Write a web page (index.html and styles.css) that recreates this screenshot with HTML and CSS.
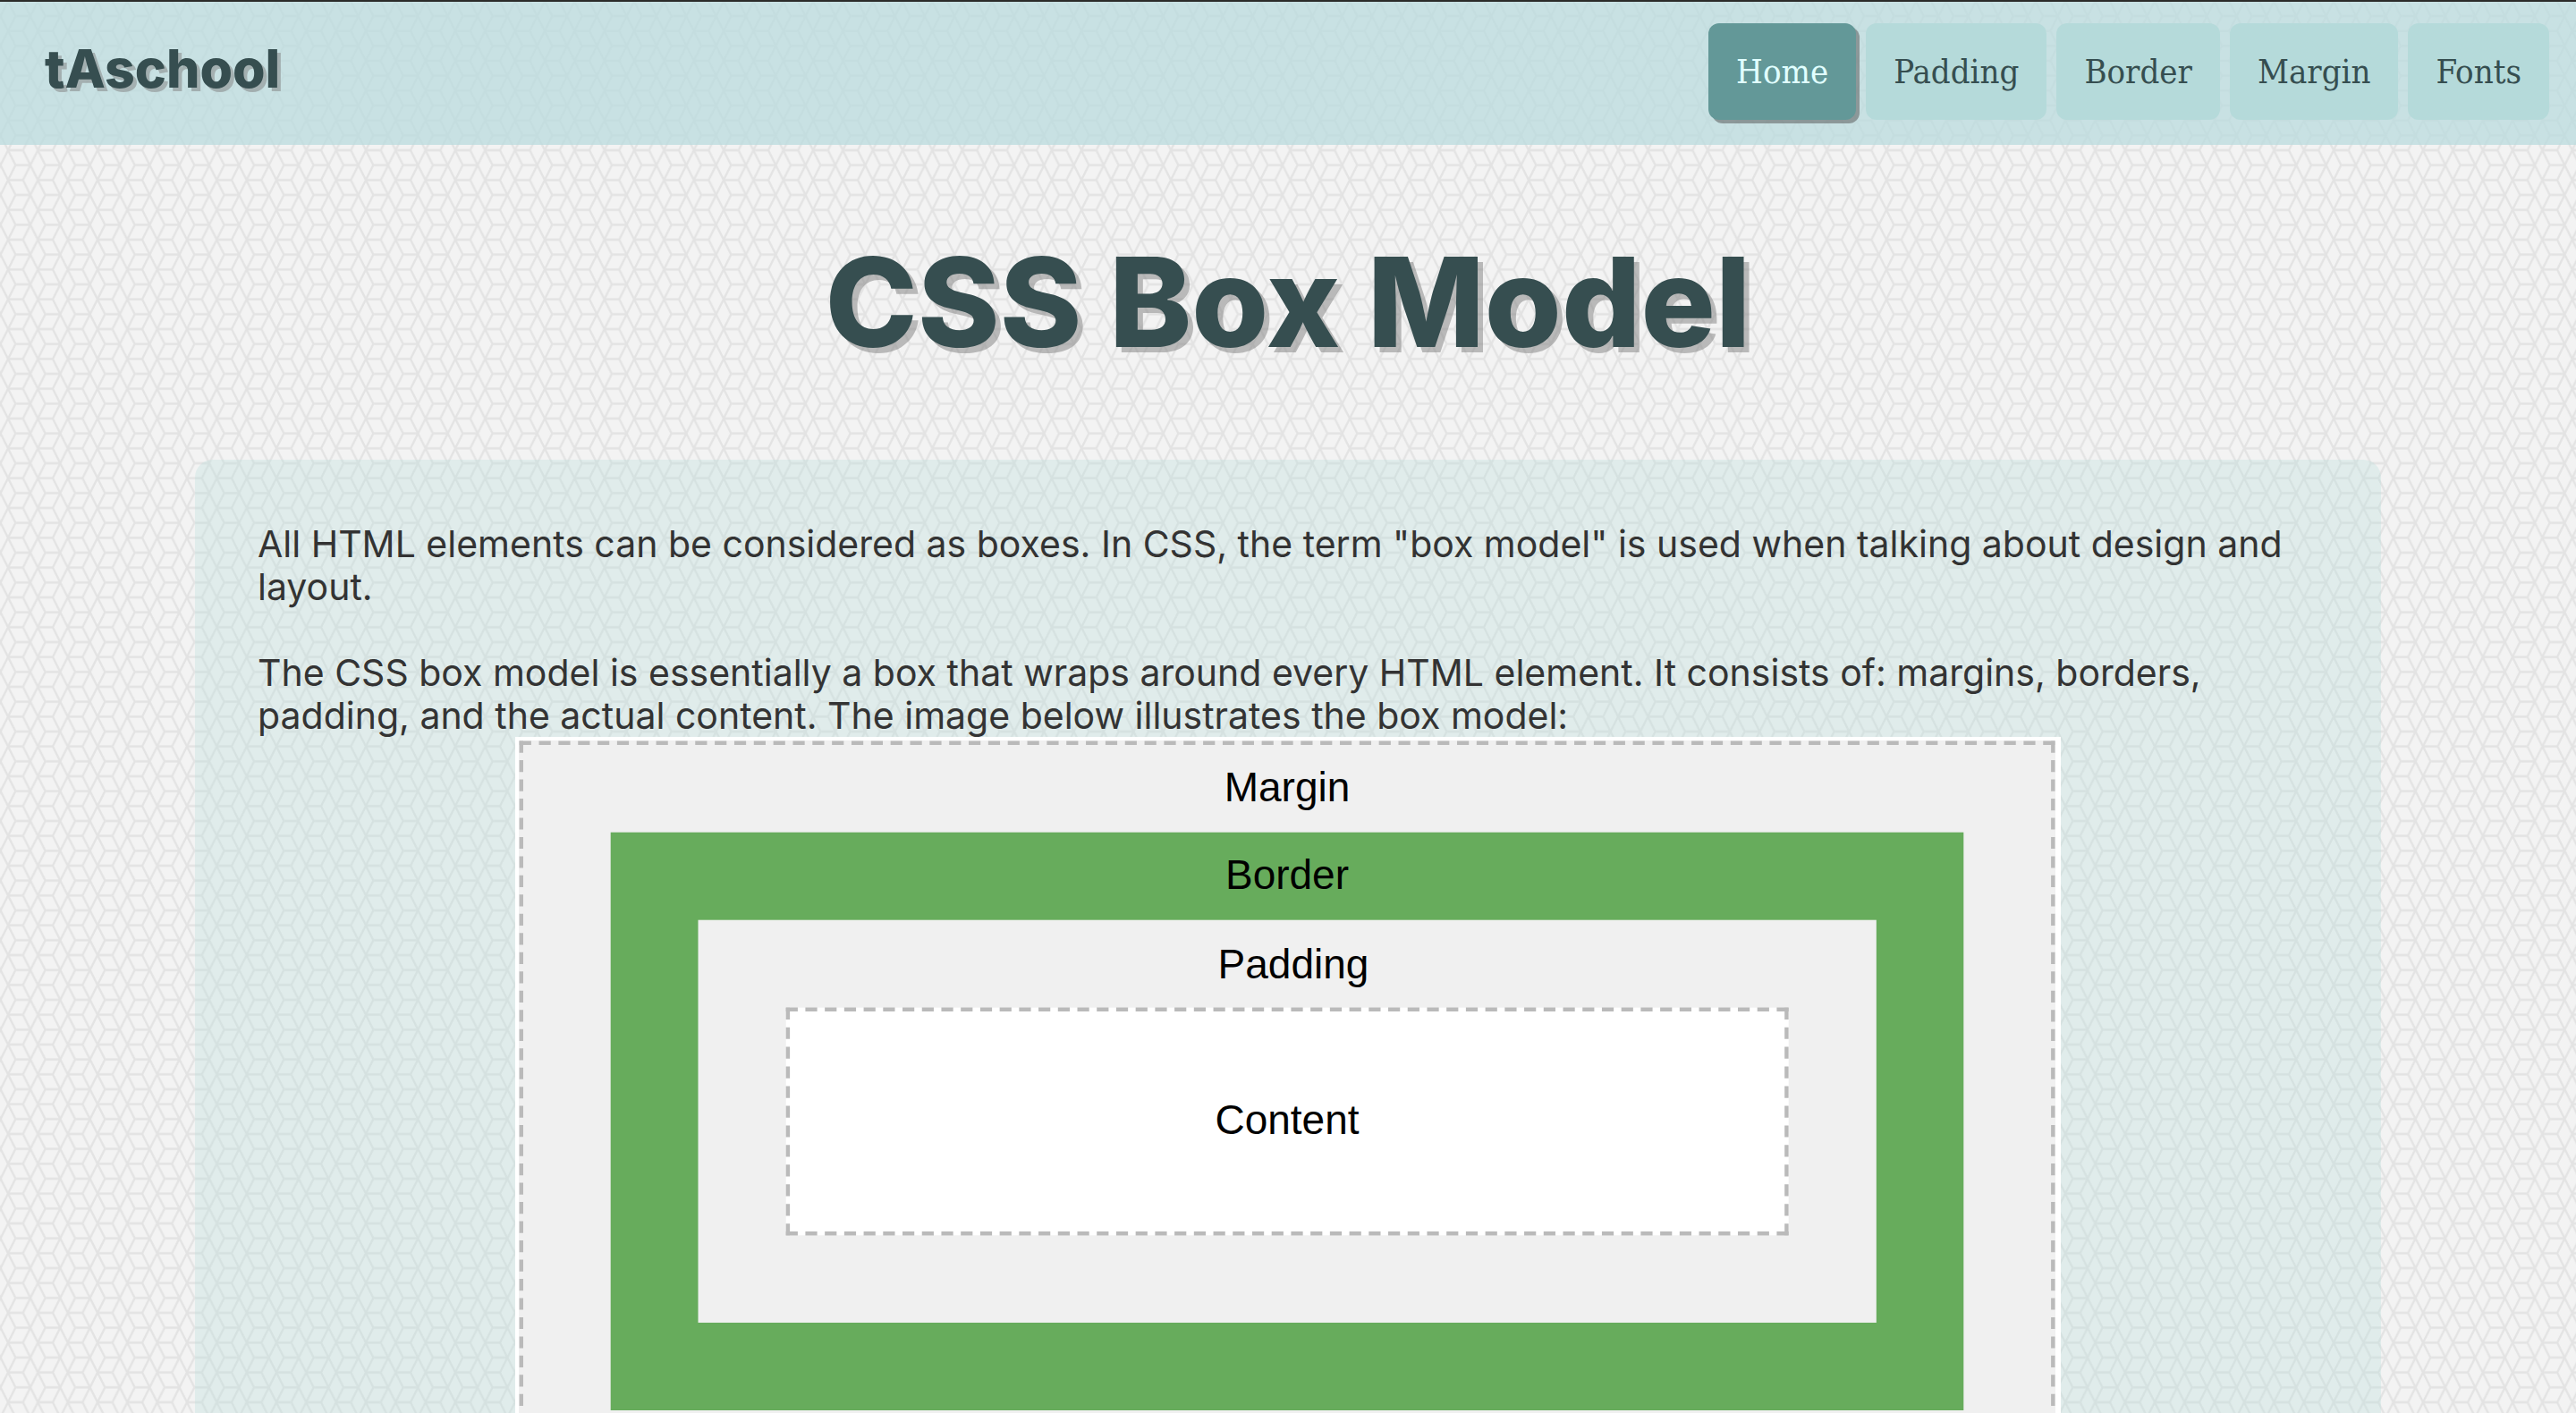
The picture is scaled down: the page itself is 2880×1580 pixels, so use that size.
FILE: index.html
```html
<!DOCTYPE html>
<html lang="en">
<head>
  <meta charset="utf-8">
  <meta name="viewport" content="width=device-width, initial-scale=1">
  <title>CSS Box Model</title>
  <link rel="stylesheet" href="styles.css">
</head>
<body>
  <header class="site-header">
    <a class="logo" href="#">tAschool</a>
    <nav class="site-nav">
      <a class="nav-link nav-link-active" href="#">Home</a>
      <a class="nav-link" href="#">Padding</a>
      <a class="nav-link" href="#">Border</a>
      <a class="nav-link" href="#">Margin</a>
      <a class="nav-link" href="#">Fonts</a>
    </nav>
  </header>
  <main>
    <h1 class="page-title">CSS Box Model</h1>
    <section class="card">
      <p class="card-text">All HTML elements can be considered as boxes. In CSS, the term "box model" is used when talking about design and layout.</p>
      <p class="card-text">The CSS box model is essentially a box that wraps around every HTML element. It consists of: margins, borders, padding, and the actual content. The image below illustrates the box model:</p>
      <svg class="diagram" viewBox="0 0 1728 856" role="img" aria-label="Box model diagram">
        <rect width="1728" height="856" fill="#fff"/>
        <rect x="4" y="4" width="1718" height="848" fill="#f0f0f0"/>
        <g stroke="#bababa" stroke-width="4.4">
          <path d="M4.7 6.7H1721.5M4.7 849.5H1721.5" stroke-dasharray="13.2 8.64"/>
          <path d="M6.8 4.5V852M1719.3 4.5V852" stroke-dasharray="13.2 8.28"/>
        </g>
        <rect x="106.7" y="106.7" width="1512.6" height="646.3" fill="#67ac5c"/>
        <rect x="204.5" y="204.7" width="1317.3" height="450.3" fill="#f0f0f0"/>
        <rect x="302.7" y="302.7" width="1121" height="254.6" fill="#fff"/>
        <g stroke="#bababa" stroke-width="4.4">
          <path d="M302.7 304.8H1423.6M302.7 555.2H1423.6" stroke-dasharray="13.2 8.52"/>
          <path d="M304.9 302.7V557.3M1421.4 302.7V557.3" stroke-dasharray="13.2 8.75"/>
        </g>
        <g class="diagram-label">
          <text x="863" y="72">Margin</text>
          <text x="863" y="170">Border</text>
          <text x="870" y="270">Padding</text>
          <text x="863" y="444">Content</text>
        </g>
      </svg>
    </section>
  </main>
</body>
</html>
```

FILE: styles.css
```css
* {
  box-sizing: border-box;
}

body {
  margin: 0;
  border-top: 2px solid #2b2b29;
  color: #333;
  font-family: Inter, "Liberation Sans", sans-serif;
  background-color: #f3f3f3;
  background-image: url("data:image/svg+xml,%3Csvg xmlns='http://www.w3.org/2000/svg' width='100' height='100' viewBox='0 0 12 12'%3E%3Cdefs%3E%3Cpattern id='c' width='4' height='4' patternUnits='userSpaceOnUse'%3E%3Cpath d='M0 1H2M1 3H3M0 1L1 3L0 5M0 1L-1 3M2 1L3 3L4 1M3 3L2 5M3 3L4 5M0 1L-1 -1M0 1L1 -1M2 1L3 -1L4 1' fill='none' stroke='%23e3e3e3' stroke-width='.28'/%3E%3C/pattern%3E%3C/defs%3E%3Crect width='12' height='12' fill='url(%23c)'/%3E%3C/svg%3E");
  background-size: 100px 100px;
  background-position: 9px -7px;
}

.site-header {
  display: flex;
  justify-content: space-between;
  align-items: flex-start;
  min-height: 160px;
  padding: 24px 30px 28px 50px;
  background: rgba(186, 219, 222, .75);
}

.logo {
  color: #364e50;
  font-size: 59px;
  font-weight: 800;
  line-height: 102px;
  text-decoration: none;
  text-shadow: 4px 4px rgba(128, 128, 128, .5);
}

.site-nav {
  display: flex;
  gap: 11px;
}

.nav-link {
  padding: 0 31px;
  border-radius: 12px;
  background: #b5dada;
  color: #364e50;
  font-family: "DejaVu Serif Condensed", "DejaVu Serif", serif;
  font-size: 38px;
  line-height: 108px;
  text-decoration: none;
}

.nav-link-active {
  background: #639898;
  color: #e0ffff;
  box-shadow: 4px 4px rgba(80, 80, 80, .5);
}

.page-title {
  margin: 0;
  padding: 96px 0;
  color: #364e50;
  font-size: 139px;
  font-weight: 800;
  line-height: 160px;
  text-align: center;
  text-shadow: 6px 6px rgba(128, 128, 128, .5);
}

.card {
  margin: 0 218px;
  padding: 70px;
  border-radius: 20px;
  background: rgba(182, 222, 219, .3);
}

.card-text {
  margin: 0 0 48px;
  font-size: 41px;
  line-height: 48px;
}

.card-text:nth-of-type(2) {
  margin-bottom: 0;
}

.diagram {
  display: block;
  width: 75%;
  margin: 0 auto;
}

.diagram-label {
  fill: #000;
  font-family: "Liberation Sans", Arial, sans-serif;
  font-size: 46px;
  text-anchor: middle;
}
```
